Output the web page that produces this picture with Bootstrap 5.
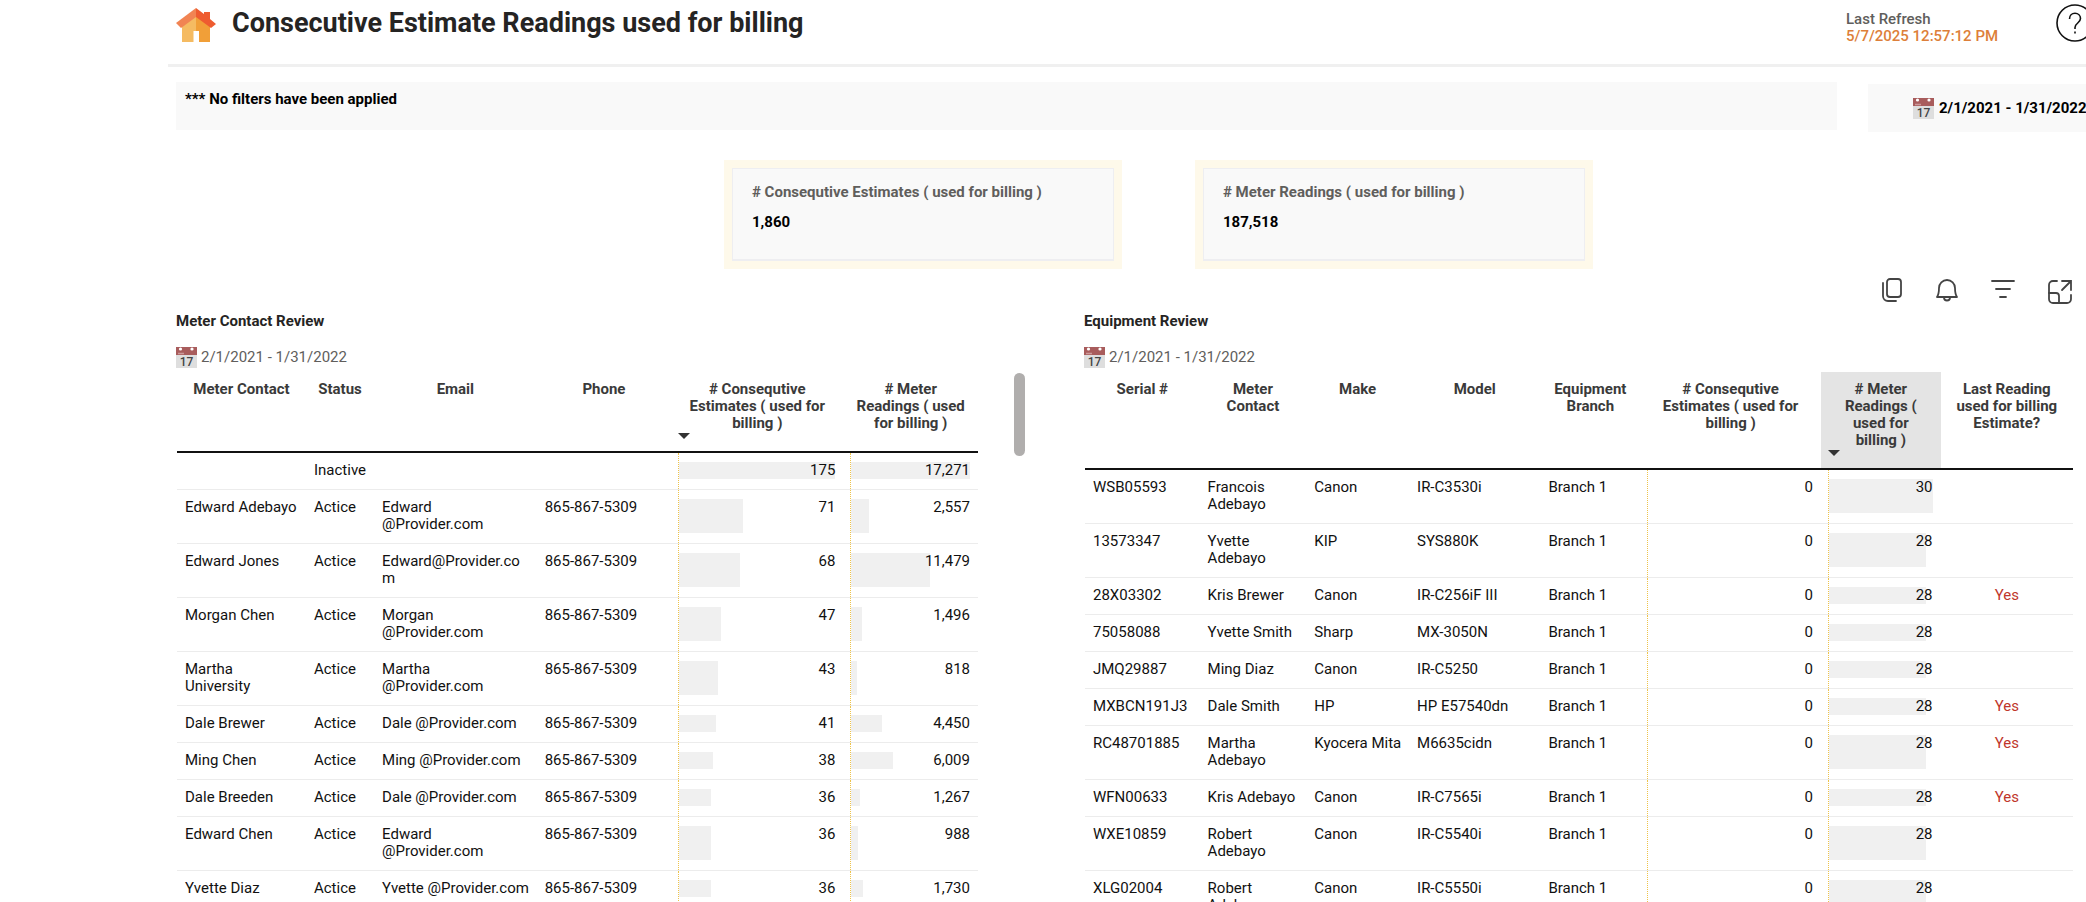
<!DOCTYPE html>
<html lang="en">
<head>
<meta charset="utf-8">
<meta name="viewport" content="width=device-width, initial-scale=1">
<title>Consecutive Estimate Readings used for billing</title>
<link href="https://cdn.jsdelivr.net/npm/bootstrap@5.3.0/dist/css/bootstrap.min.css" rel="stylesheet">
<style>
  body { font-family: Roboto, "Liberation Sans", sans-serif; font-size: 15px; line-height: 17px; color: #111; background: #fff; }
  .report { padding-left: 168px; height: 100vh; overflow: hidden; }
  .report-head { height: 67px; border-bottom: 3px solid #f0f0f0; padding: 4px 0 0 8px; }
  .report-title { font-size: 27px; line-height: 38px; font-weight: 700; color: #252423; margin: 0 0 0 15px; }
  .refresh { width: 210px; margin-top: 7px; font-weight: 500; color: #605e5c; }
  .refresh-time { color: #dd7f3a; }
  .help-btn { width: 38px; height: 38px; margin-right: -8px; }
  .filter-row { padding: 15px 0 0 8px; gap: 31px; }
  .filter-box { background: #f9f9f9; height: 48px; padding: 9px; font-weight: 700; color: #000; }
  .date-box { background: #f9f9f9; height: 48px; width: 218px; margin-top: 2px; padding-left: 45px; gap: 5px; font-weight: 700; color: #000; white-space: nowrap; }
  .kpi-row { padding: 28px 493px 0 556px; gap: 73px; }
  .kpi { background: #fef9ea; padding: 8px; flex: 1 1 0; height: 109px; }
  .kpi-body { background: #f9f9f9; border: 1px solid #eeeef1; border-bottom-width: 2px; height: 93px; padding: 15px 19px; }
  .kpi-label { font-weight: 700; color: #605e5c; margin-bottom: 13px; }
  .kpi-value { font-weight: 700; color: #000; }
  .tools { height: 35px; padding: 8px 13px 0 0; gap: 30px; }
  .tool-btn { width: 26px; height: 28px; }
  .panels { padding: 9px 13px 0 8px; }
  .panel-l { flex: 802 1 0; min-width: 0; }
  .panel-r { flex: 989 1 0; min-width: 0; }
  .panel-title { font-size: 15px; line-height: 17px; font-weight: 700; color: #252423; margin: 0; }
  .panel-date { height: 22px; margin: 16px 0 4px; gap: 4px; color: #605e5c; }
  .panel-grid { padding-left: 1px; }
  .scroll-gutter { width: 106px; padding: 60px 0 0 36px; }
  .scroll-thumb { width: 11px; height: 83px; border-radius: 6px; background: #b0aead; }
  .grid-table { table-layout: fixed; width: 100%; margin: 0; border-collapse: separate; border-spacing: 0; }
  .grid-table th { position: relative; vertical-align: top; text-align: center; font-weight: 700; color: #3a3a3a; padding: 9px 4px 19px; border-bottom: 2px solid #111; white-space: nowrap; }
  .grid-table td { position: relative; vertical-align: top; padding: 9px 8px 10px; border-bottom: 1px solid #ececec; white-space: nowrap; }
  .grid-table .sorted::after { content: ""; position: absolute; left: 7px; bottom: 12px; border: 6px solid transparent; border-top-color: #333; border-bottom: 0; }
  .grid-table .hovered { background: #e4e4e4; }
  .grid-table td.num { text-align: right; }
  .grid-table td.num::before { content: ""; position: absolute; left: 7px; top: 0; bottom: 0; border-left: 1px dotted #eec34a; }
  .num .track { position: absolute; left: 8px; right: 8px; top: 9px; bottom: 10px; }
  .num .fill { height: 100%; background: #f0f0f0; }
  .num .val { position: relative; }
  .grid-table td.flag { text-align: center; color: #c0362c; }
</style>
</head>
<body>
<div class="report">
  <header class="report-head d-flex align-items-start">
    <a href="#" aria-label="Home" class="d-block"><svg class="d-block" width="41" height="40" viewBox="0 0 41 40">
      <path d="M6 21 20 11v27H6z" fill="#f5bb62"/><path d="m20 11 14 10v17H20z" fill="#f19f38"/>
      <path d="M17.500 27h5.500v11h-5.500z" fill="#fff"/>
      <path d="M20 4v9L5 24 0 19z" fill="#f18453"/><path d="m20 4 8 6V8h6v7l6 5-5 4-15-11z" fill="#ee5c30"/>
    </svg></a>
    <h1 class="report-title flex-grow-1">Consecutive Estimate Readings used for billing</h1>
    <div class="refresh"><div>Last Refresh</div><div class="refresh-time">5/7/2025 12:57:12 PM</div></div>
    <button type="button" class="help-btn btn p-0 border-0" aria-label="Help"><svg class="d-block" width="38" height="38" viewBox="0 0 38 38" fill="none" stroke="#111" stroke-width="1.600"><circle cx="19" cy="19" r="18"/><path d="M13.500 15c0-3.500 2.400-5.700 5.500-5.700s5.500 2.200 5.500 5.300c0 4.200-5.500 4.600-5.500 8.800v1.500"/><path d="M19 27.500v2"/></svg></button>
  </header>
  <div class="filter-row d-flex align-items-start">
    <div class="filter-box flex-grow-1">*** No filters have been applied</div>
    <div class="date-box d-flex align-items-center"><svg class="flex-shrink-0" width="21" height="21" viewBox="0 0 21 21"><rect width="21" height="21" fill="#dedede"/><rect width="21" height="8" fill="#a85c5c"/><circle cx="4.500" cy="2" r="1.600" fill="#fff"/><circle cx="16" cy="2" r="1.600" fill="#fff"/><path d="M2 6.500h6" stroke="#c99" stroke-width="1.500"/><text x="10.500" y="19" font-size="12" font-weight="500" text-anchor="middle" fill="#444">17</text></svg>2/1/2021 - 1/31/2022</div>
  </div>
  <div class="kpi-row d-flex">
    <div class="kpi"><div class="kpi-body"><div class="kpi-label"># Consequtive Estimates ( used for billing )</div><div class="kpi-value">1,860</div></div></div>
    <div class="kpi"><div class="kpi-body"><div class="kpi-label"># Meter Readings ( used for billing )</div><div class="kpi-value">187,518</div></div></div>
  </div>
  <div class="tools d-flex justify-content-end">
    <button type="button" class="tool-btn btn p-0 border-0" aria-label="Copy"><svg class="d-block" width="26" height="28" viewBox="0 0 26 28" fill="none" stroke="#444" stroke-width="1.800"><rect x="8" y="2" width="14" height="18" rx="3"/><path d="M4 6v13a5 5 0 0 0 5 5h8" stroke-linecap="round"/></svg></button>
    <button type="button" class="tool-btn btn p-0 border-0" aria-label="Alerts"><svg class="d-block" width="26" height="28" viewBox="0 0 26 28" fill="none" stroke="#444" stroke-width="1.800" stroke-linejoin="round"><path d="M2 20c2-3 2-5 2-9a8 8 0 0 1 16 0c0 4 0 6 2 9z"/><path d="M9 20.500a3 3 0 0 0 6 0"/></svg></button>
    <button type="button" class="tool-btn btn p-0 border-0" aria-label="Filters"><svg class="d-block" width="26" height="28" viewBox="0 0 26 28" stroke="#444" stroke-width="1.800" stroke-linecap="round"><path d="M1 4h22M5 12h14M9 20h6"/></svg></button>
    <button type="button" class="tool-btn btn p-0 border-0" aria-label="Focus mode"><svg class="d-block" width="26" height="28" viewBox="0 0 26 28" fill="none" stroke="#444" stroke-width="1.800" stroke-linecap="round"><path d="M10 4H6a4 4 0 0 0-4 4v14a4 4 0 0 0 4 4h14a4 4 0 0 0 4-4v-4"/><path d="M15 4h9v9M24 4l-9 9"/><path d="M2 16h7a3 3 0 0 1 3 3v7"/></svg></button>
  </div>
  <main class="panels d-flex">
    <section class="panel-l">
      <h2 class="panel-title">Meter Contact Review</h2>
      <div class="panel-date d-flex align-items-center"><svg width="21" height="21" viewBox="0 0 21 21"><rect width="21" height="21" fill="#dedede"/><rect width="21" height="8" fill="#a85c5c"/><circle cx="4.500" cy="2" r="1.600" fill="#fff"/><circle cx="16" cy="2" r="1.600" fill="#fff"/><path d="M2 6.500h6" stroke="#c99" stroke-width="1.500"/><text x="10.500" y="19" font-size="12" font-weight="500" text-anchor="middle" fill="#444">17</text></svg>2/1/2021 - 1/31/2022</div>
      <div class="panel-grid"><table class="grid-table">
        <colgroup><col style="width:16.1%"><col style="width:8.5%"><col style="width:20.3%"><col style="width:16.8%"><col style="width:21.5%"><col style="width:16.8%"></colgroup>
        <thead><tr><th>Meter Contact</th><th>Status</th><th>Email</th><th>Phone</th><th class="sorted"># Consequtive<br>Estimates ( used for<br>billing )</th><th># Meter<br>Readings ( used<br>for billing )</th></tr></thead>
        <tbody>
          <tr><td></td><td>Inactive</td><td></td><td></td><td class="num"><div class="track"><div class="fill" style="width:100%"></div></div><span class="val">175</span></td><td class="num"><div class="track"><div class="fill" style="width:100%"></div></div><span class="val">17,271</span></td></tr>
          <tr><td>Edward Adebayo</td><td>Actice</td><td>Edward<br>@Provider.com</td><td>865-867-5309</td><td class="num"><div class="track"><div class="fill" style="width:40.6%"></div></div><span class="val">71</span></td><td class="num"><div class="track"><div class="fill" style="width:14.8%"></div></div><span class="val">2,557</span></td></tr>
          <tr><td>Edward Jones</td><td>Actice</td><td>Edward@Provider.co<br>m</td><td>865-867-5309</td><td class="num"><div class="track"><div class="fill" style="width:38.9%"></div></div><span class="val">68</span></td><td class="num"><div class="track"><div class="fill" style="width:66.5%"></div></div><span class="val">11,479</span></td></tr>
          <tr><td>Morgan Chen</td><td>Actice</td><td>Morgan<br>@Provider.com</td><td>865-867-5309</td><td class="num"><div class="track"><div class="fill" style="width:26.9%"></div></div><span class="val">47</span></td><td class="num"><div class="track"><div class="fill" style="width:8.7%"></div></div><span class="val">1,496</span></td></tr>
          <tr><td>Martha<br>University</td><td>Actice</td><td>Martha<br>@Provider.com</td><td>865-867-5309</td><td class="num"><div class="track"><div class="fill" style="width:24.6%"></div></div><span class="val">43</span></td><td class="num"><div class="track"><div class="fill" style="width:4.7%"></div></div><span class="val">818</span></td></tr>
          <tr><td>Dale Brewer</td><td>Actice</td><td>Dale @Provider.com</td><td>865-867-5309</td><td class="num"><div class="track"><div class="fill" style="width:23.4%"></div></div><span class="val">41</span></td><td class="num"><div class="track"><div class="fill" style="width:25.8%"></div></div><span class="val">4,450</span></td></tr>
          <tr><td>Ming Chen</td><td>Actice</td><td>Ming @Provider.com</td><td>865-867-5309</td><td class="num"><div class="track"><div class="fill" style="width:21.7%"></div></div><span class="val">38</span></td><td class="num"><div class="track"><div class="fill" style="width:34.8%"></div></div><span class="val">6,009</span></td></tr>
          <tr><td>Dale Breeden</td><td>Actice</td><td>Dale @Provider.com</td><td>865-867-5309</td><td class="num"><div class="track"><div class="fill" style="width:20.6%"></div></div><span class="val">36</span></td><td class="num"><div class="track"><div class="fill" style="width:7.3%"></div></div><span class="val">1,267</span></td></tr>
          <tr><td>Edward Chen</td><td>Actice</td><td>Edward<br>@Provider.com</td><td>865-867-5309</td><td class="num"><div class="track"><div class="fill" style="width:20.6%"></div></div><span class="val">36</span></td><td class="num"><div class="track"><div class="fill" style="width:5.7%"></div></div><span class="val">988</span></td></tr>
          <tr><td>Yvette Diaz</td><td>Actice</td><td>Yvette @Provider.com</td><td>865-867-5309</td><td class="num"><div class="track"><div class="fill" style="width:20.6%"></div></div><span class="val">36</span></td><td class="num"><div class="track"><div class="fill" style="width:10%"></div></div><span class="val">1,730</span></td></tr>
        </tbody>
      </table></div>
    </section>
    <div class="scroll-gutter flex-shrink-0"><div class="scroll-thumb"></div></div>
    <section class="panel-r">
      <h2 class="panel-title">Equipment Review</h2>
      <div class="panel-date d-flex align-items-center"><svg width="21" height="21" viewBox="0 0 21 21"><rect width="21" height="21" fill="#dedede"/><rect width="21" height="8" fill="#a85c5c"/><circle cx="4.500" cy="2" r="1.600" fill="#fff"/><circle cx="16" cy="2" r="1.600" fill="#fff"/><path d="M2 6.500h6" stroke="#c99" stroke-width="1.500"/><text x="10.500" y="19" font-size="12" font-weight="500" text-anchor="middle" fill="#444">17</text></svg>2/1/2021 - 1/31/2022</div>
      <div class="panel-grid"><table class="grid-table">
        <colgroup><col style="width:11.6%"><col style="width:10.8%"><col style="width:10.4%"><col style="width:13.3%"><col style="width:10.1%"><col style="width:18.3%"><col style="width:12.1%"><col style="width:13.4%"></colgroup>
        <thead><tr><th>Serial #</th><th>Meter<br>Contact</th><th>Make</th><th>Model</th><th>Equipment<br>Branch</th><th># Consequtive<br>Estimates ( used for<br>billing )</th><th class="sorted hovered"># Meter<br>Readings (<br>used for<br>billing )</th><th>Last Reading<br>used for billing<br>Estimate?</th></tr></thead>
        <tbody>
          <tr><td>WSB05593</td><td>Francois<br>Adebayo</td><td>Canon</td><td>IR-C3530i</td><td>Branch 1</td><td class="num">0</td><td class="num"><div class="track"><div class="fill" style="width:100%"></div></div><span class="val">30</span></td><td class="flag"></td></tr>
          <tr><td>13573347</td><td>Yvette<br>Adebayo</td><td>KIP</td><td>SYS880K</td><td>Branch 1</td><td class="num">0</td><td class="num"><div class="track"><div class="fill" style="width:93.3%"></div></div><span class="val">28</span></td><td class="flag"></td></tr>
          <tr><td>28X03302</td><td>Kris Brewer</td><td>Canon</td><td>IR-C256iF III</td><td>Branch 1</td><td class="num">0</td><td class="num"><div class="track"><div class="fill" style="width:93.3%"></div></div><span class="val">28</span></td><td class="flag">Yes</td></tr>
          <tr><td>75058088</td><td>Yvette Smith</td><td>Sharp</td><td>MX-3050N</td><td>Branch 1</td><td class="num">0</td><td class="num"><div class="track"><div class="fill" style="width:93.3%"></div></div><span class="val">28</span></td><td class="flag"></td></tr>
          <tr><td>JMQ29887</td><td>Ming Diaz</td><td>Canon</td><td>IR-C5250</td><td>Branch 1</td><td class="num">0</td><td class="num"><div class="track"><div class="fill" style="width:93.3%"></div></div><span class="val">28</span></td><td class="flag"></td></tr>
          <tr><td>MXBCN191J3</td><td>Dale Smith</td><td>HP</td><td>HP E57540dn</td><td>Branch 1</td><td class="num">0</td><td class="num"><div class="track"><div class="fill" style="width:93.3%"></div></div><span class="val">28</span></td><td class="flag">Yes</td></tr>
          <tr><td>RC48701885</td><td>Martha<br>Adebayo</td><td>Kyocera Mita</td><td>M6635cidn</td><td>Branch 1</td><td class="num">0</td><td class="num"><div class="track"><div class="fill" style="width:93.3%"></div></div><span class="val">28</span></td><td class="flag">Yes</td></tr>
          <tr><td>WFN00633</td><td>Kris Adebayo</td><td>Canon</td><td>IR-C7565i</td><td>Branch 1</td><td class="num">0</td><td class="num"><div class="track"><div class="fill" style="width:93.3%"></div></div><span class="val">28</span></td><td class="flag">Yes</td></tr>
          <tr><td>WXE10859</td><td>Robert<br>Adebayo</td><td>Canon</td><td>IR-C5540i</td><td>Branch 1</td><td class="num">0</td><td class="num"><div class="track"><div class="fill" style="width:93.3%"></div></div><span class="val">28</span></td><td class="flag"></td></tr>
          <tr><td>XLG02004</td><td>Robert<br>Adebayo</td><td>Canon</td><td>IR-C5550i</td><td>Branch 1</td><td class="num">0</td><td class="num"><div class="track"><div class="fill" style="width:93.3%"></div></div><span class="val">28</span></td><td class="flag"></td></tr>
        </tbody>
      </table></div>
    </section>
  </main>
</div>
<script src="https://cdn.jsdelivr.net/npm/bootstrap@5.3.0/dist/js/bootstrap.bundle.min.js"></script>
</body>
</html>
